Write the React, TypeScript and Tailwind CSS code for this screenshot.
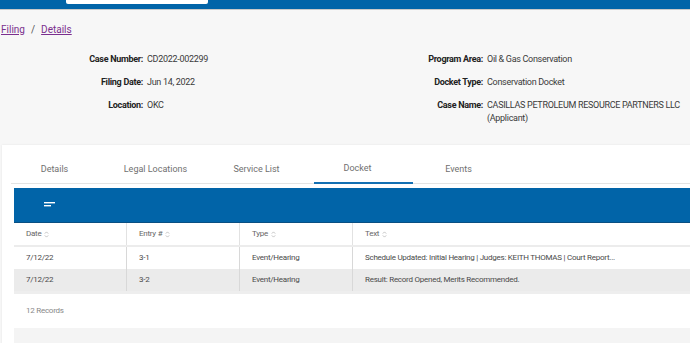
import React from "react";

const SortIcon: React.FC = () => (
  <svg width="5" height="7" viewBox="0 0 5 7" className="ml-[3px] inline-block">
    <path d="M0.8 2.6 L2.5 0.9 L4.2 2.6" fill="none" stroke="#b5b5b5" strokeWidth="0.8" />
    <path d="M0.8 4.4 L2.5 6.1 L4.2 4.4" fill="none" stroke="#b5b5b5" strokeWidth="0.8" />
  </svg>
);

const details = {
  left: [
    ["Case Number:", "CD2022-002299"],
    ["Filing Date:", "Jun 14, 2022"],
    ["Location:", "OKC"],
  ],
  right: [
    ["Program Area:", "Oil & Gas Conservation"],
    ["Docket Type:", "Conservation Docket"],
    ["Case Name:", "CASILLAS PETROLEUM RESOURCE PARTNERS LLC (Applicant)"],
  ],
};

const tabs = ["Details", "Legal Locations", "Service List", "Docket", "Events"];

const rows = [
  ["7/12/22", "3-1", "Event/Hearing", "Schedule Updated: Initial Hearing | Judges: KEITH THOMAS | Court Report..."],
  ["7/12/22", "3-2", "Event/Hearing", "Result: Record Opened, Merits Recommended."],
];

const App: React.FC = () => {
  return (
    <div className="w-[690px] h-[343px] overflow-hidden bg-[#f7f7f7] font-['Roboto',sans-serif] text-[#333]">
      {/* top bar */}
      <div className="h-[10px] bg-[#0164a8] border-b border-[#c9c9c9] relative">
        <div className="absolute left-[66px] top-0 w-[142px] h-[4px] bg-white rounded-b-[2px]" />
      </div>

      {/* breadcrumb */}
      <div className="h-[37px] flex items-center pl-[1px] pt-[1px] text-[10px] text-[#7b2f8e]">
        <a className="underline">Filing</a>
        <span className="mx-[6px] text-[#555]">/</span>
        <a className="underline">Details</a>
      </div>

      {/* case details */}
      <div className="flex pt-[6px] text-[9px] leading-[13px] tracking-[-0.3px]">
        <div className="w-[345px] flex flex-col gap-[10px]">
          {details.left.map(([k, v]) => (
            <div key={k} className="flex">
              <div className="w-[143px] text-right font-bold text-[#222]">{k}</div>
              <div className="pl-[4px] text-[#3a3a3a]">{v}</div>
            </div>
          ))}
        </div>
        <div className="flex-1 flex flex-col gap-[10px]">
          {details.right.map(([k, v]) => (
            <div key={k} className="flex">
              <div className="w-[138px] shrink-0 text-right font-bold text-[#222]">{k}</div>
              <div className="pl-[4px] w-[205px] text-[#3a3a3a]">{v}</div>
            </div>
          ))}
        </div>
      </div>

      {/* card */}
      <div className="mt-[20px] ml-[2px] w-[720px] bg-white shadow-[0_0_2px_rgba(0,0,0,0.08)] pt-[11px]">
        <div className="ml-[9px] flex border-b border-[#e3e3e3] h-[28px]">
          {tabs.map((t) => (
            <div
              key={t}
              className={
                t === "Docket"
                  ? "w-[99px] mr-[2px] pr-[12px] flex items-center justify-center text-[9px] text-[#707070] border-b-2 border-[#1470b3] mb-[-1px]"
                  : "w-[99px] mr-[2px] pr-[12px] flex items-center justify-center text-[9px] text-[#707070]"
              }
            >
              {t}
            </div>
          ))}
        </div>

        <div className="ml-[12px] mt-[4px]">
          <div className="h-[35px] bg-[#0164a8] border-b border-[#0a4f82] flex items-center pl-[30px]">
            <svg width="12" height="6" viewBox="0 0 12 6">
              <rect x="0" y="0" width="11" height="1.4" fill="#ffffff" />
              <rect x="0" y="3" width="7" height="1.4" fill="#ffffff" />
            </svg>
          </div>

          <div className="text-[8px] text-[#4a4a4a] tracking-[-0.25px]">
            <div className="flex h-[24px] bg-white border-b-2 border-[#ececec] text-[#666]">
              <div className="w-[113px] border-r border-[#e2e2e2] flex items-center pl-[12px]">Date<SortIcon /></div>
              <div className="w-[113px] border-r border-[#e2e2e2] flex items-center pl-[12px]">Entry #<SortIcon /></div>
              <div className="w-[113px] border-r border-[#e2e2e2] flex items-center pl-[12px]">Type<SortIcon /></div>
              <div className="flex-1 flex items-center pl-[12px]">Text<SortIcon /></div>
            </div>
            {rows.map((r, i) => (
              <div key={i} className={i % 2 ? "flex h-[22px] bg-[#ebebeb]" : "flex h-[22px] bg-white"}>
                <div className="w-[113px] border-r border-[#d8d8d8] flex items-center pl-[12px]">{r[0]}</div>
                <div className="w-[113px] border-r border-[#d8d8d8] flex items-center pl-[12px]">{r[1]}</div>
                <div className="w-[113px] border-r border-[#d8d8d8] flex items-center pl-[12px]">{r[2]}</div>
                <div className="flex-1 flex items-center pl-[12px]">{r[3]}</div>
              </div>
            ))}
            <div className="h-[37px] bg-white border-t-[3px] border-[#eeeeee] flex items-center pl-[12px] text-[#888]">
              12 Records
            </div>
            <div className="h-[30px] bg-[#f4f4f4]" />
          </div>
        </div>
      </div>
    </div>
  );
};

export default App;
